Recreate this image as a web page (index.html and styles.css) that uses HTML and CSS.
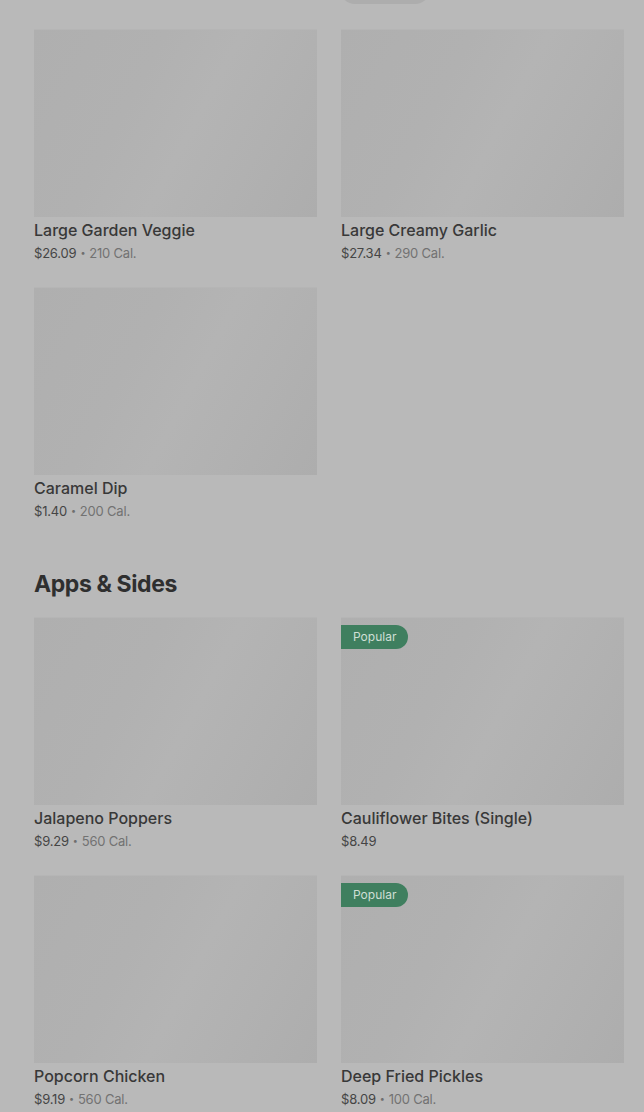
FILE: index.html
```html
<!DOCTYPE html>
<html>
<head>
<meta charset="utf-8">
<link rel="stylesheet" href="styles.css">
</head>
<body>
<div class="page">
  <div class="top-row"><div class="top-pill"></div></div>

  <div class="grid first">
    <div class="card">
      <div class="img"></div>
      <div class="title">Large Garden Veggie</div>
      <div class="meta"><span class="price">$26.09</span><span class="dot">•</span><span class="cal">210 Cal.</span></div>
    </div>
    <div class="card">
      <div class="img"></div>
      <div class="title">Large Creamy Garlic</div>
      <div class="meta"><span class="price">$27.34</span><span class="dot">•</span><span class="cal">290 Cal.</span></div>
    </div>
    <div class="card">
      <div class="img"></div>
      <div class="title">Caramel Dip</div>
      <div class="meta"><span class="price">$1.40</span><span class="dot">•</span><span class="cal">200 Cal.</span></div>
    </div>
  </div>

  <h2 class="section-title">Apps &amp; Sides</h2>

  <div class="grid">
    <div class="card">
      <div class="img"></div>
      <div class="title">Jalapeno Poppers</div>
      <div class="meta"><span class="price">$9.29</span><span class="dot">•</span><span class="cal">560 Cal.</span></div>
    </div>
    <div class="card">
      <div class="img"><span class="badge">Popular</span></div>
      <div class="title">Cauliflower Bites (Single)</div>
      <div class="meta"><span class="price">$8.49</span></div>
    </div>
    <div class="card">
      <div class="img"></div>
      <div class="title">Popcorn Chicken</div>
      <div class="meta"><span class="price">$9.19</span><span class="dot">•</span><span class="cal">560 Cal.</span></div>
    </div>
    <div class="card">
      <div class="img"><span class="badge">Popular</span></div>
      <div class="title">Deep Fried Pickles</div>
      <div class="meta"><span class="price">$8.09</span><span class="dot">•</span><span class="cal">100 Cal.</span></div>
    </div>
  </div>
</div>
</body>
</html>
```

FILE: styles.css
```css
html, body {
  margin: 0;
  padding: 0;
  background: #b9b9b9;
  font-family: Inter, "Noto Sans", "Liberation Sans", sans-serif;
  color: #333333;
}

.page {
  padding: 0 20px 40px 34px;
}

.top-row {
  height: 4px;
  overflow: hidden;
  display: flex;
  align-items: flex-end;
  padding-left: 306px;
}

.top-pill {
  width: 90px;
  height: 30px;
  border-radius: 15px;
  background: #adadad;
  flex: none;
}

.grid {
  display: grid;
  grid-template-columns: 283px 283px;
  column-gap: 24px;
  row-gap: 24px;
  margin-top: 25px;
}

.card {
  display: flex;
  flex-direction: column;
}

.img {
  height: 188px;
  background: linear-gradient(118deg, #afafaf 0%, #b1b1b1 35%, #b4b4b4 55%, #b1b1b1 75%, #adadad 100%);
  box-shadow: inset 0 1px 0 #b5b5b5;
  display: flex;
  align-items: flex-start;
  padding-top: 8px;
  box-sizing: border-box;
}

.badge {
  background: #3f7f5f;
  color: #cfdfd5;
  font-size: 12px;
  line-height: 24px;
  height: 24px;
  padding: 0 12px;
  border-radius: 0 12px 12px 0;
}

.title {
  margin-top: 3px;
  font-size: 16px;
  font-weight: 500;
  line-height: 20px;
  color: #383838;
}

.meta {
  margin-top: 3px;
  height: 20px;
  display: flex;
  align-items: center;
  font-size: 13px;
  line-height: 20px;
  letter-spacing: -0.2px;
}

.price {
  color: #454545;
}

.dot {
  color: #6e6e6e;
  margin: 0 4px;
  font-size: 9px;
  line-height: 20px;
}

.cal {
  color: #727272;
}

.section-title {
  margin: 47px 0 0 0;
  font-size: 23px;
  line-height: 32px;
  font-weight: 700;
  letter-spacing: -0.4px;
  color: #2f2f2f;
}

.section-title + .grid {
  margin-top: 17px;
}
```
